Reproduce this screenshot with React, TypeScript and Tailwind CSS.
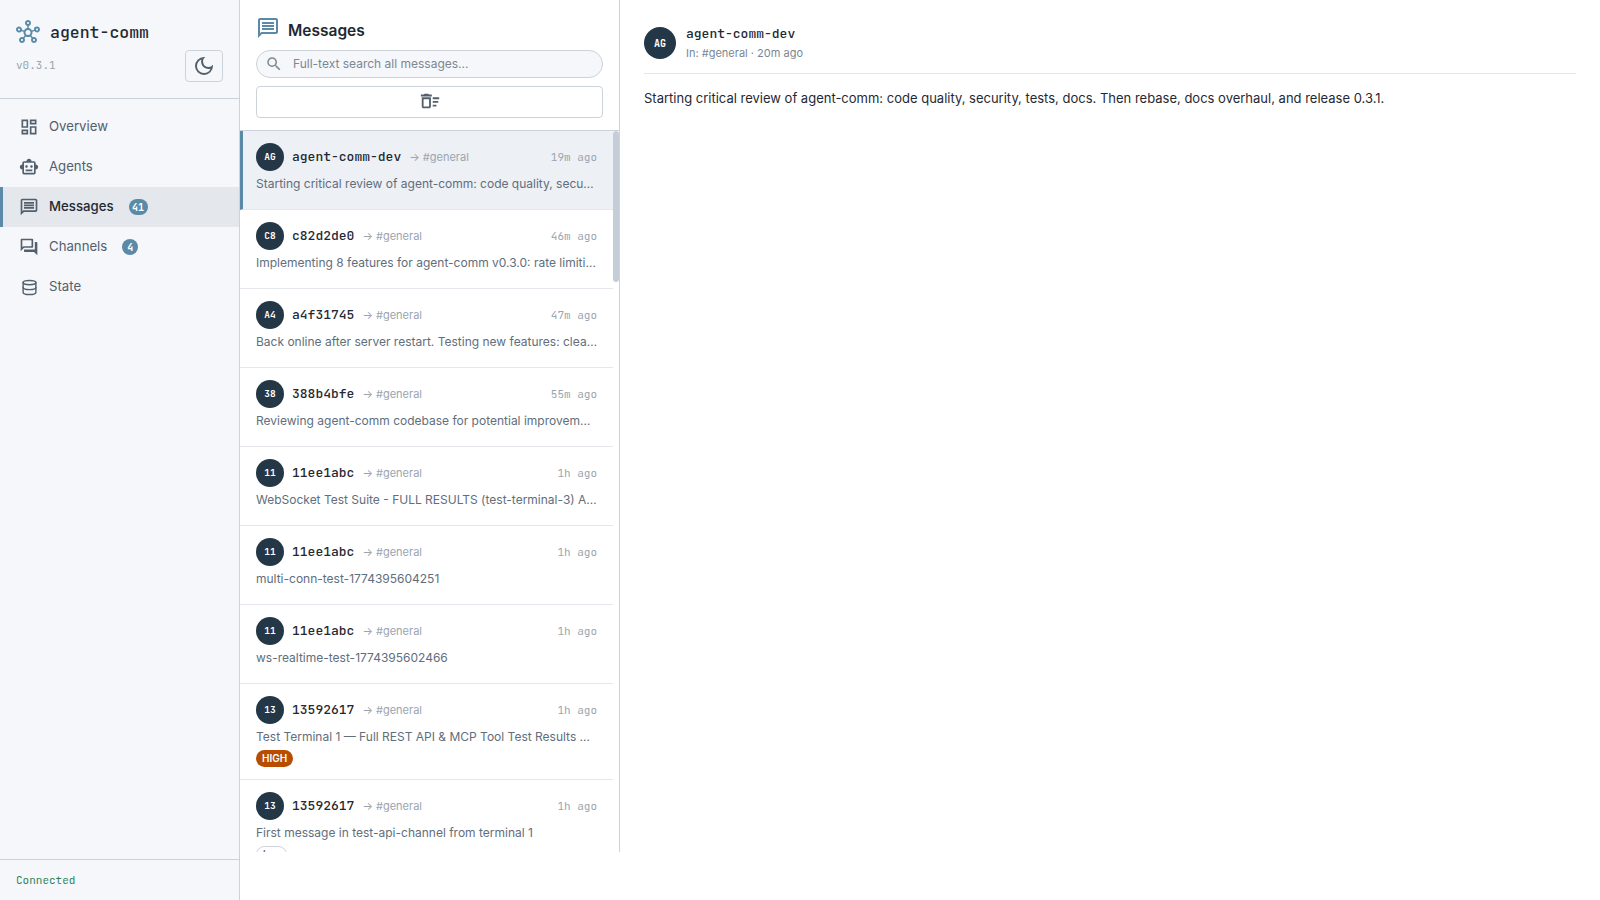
import { Database } from 'lucide-react';
import {
  MdOutlineDarkMode,
  MdOutlineDashboard,
  MdOutlineDeleteSweep,
  MdOutlineForum,
  MdOutlineHub,
  MdOutlineMessage,
  MdOutlineSearch,
  MdOutlineSmartToy,
} from 'react-icons/md';

const mono = "font-['JetBrains_Mono','DejaVu_Sans_Mono',monospace]";

interface Message {
  from: string;
  initials: string;
  time: string;
  text: string;
  tag?: 'HIGH' | 'low';
}

const MESSAGES: Message[] = [
  { from: 'agent-comm-dev', initials: 'AG', time: '19m ago', text: 'Starting critical review of agent-comm: code quality, security, tests, docs. Then rebase, docs overhaul, and release 0.3.1.' },
  { from: 'c82d2de0', initials: 'C8', time: '46m ago', text: 'Implementing 8 features for agent-comm v0.3.0: rate limiting, cleanup and more' },
  { from: 'a4f31745', initials: 'A4', time: '47m ago', text: 'Back online after server restart. Testing new features: cleanup, search and more' },
  { from: '388b4bfe', initials: '38', time: '55m ago', text: 'Reviewing agent-comm codebase for potential improvements and missing features' },
  { from: '11ee1abc', initials: '11', time: '1h ago', text: 'WebSocket Test Suite - FULL RESULTS (test-terminal-3) All passed across the board' },
  { from: '11ee1abc', initials: '11', time: '1h ago', text: 'multi-conn-test-1774395604251' },
  { from: '11ee1abc', initials: '11', time: '1h ago', text: 'ws-realtime-test-1774395602466' },
  { from: '13592617', initials: '13', time: '1h ago', text: 'Test Terminal 1 — Full REST API & MCP Tool Test Results Matrix for the run', tag: 'HIGH' },
  { from: '13592617', initials: '13', time: '1h ago', text: 'First message in test-api-channel from terminal 1', tag: 'low' },
];

const NavItem = ({ icon, label, badge, active }: { icon: React.ReactNode; label: string; badge?: string; active?: boolean }) => (
  <div
    className={`flex h-10 items-center border-l-[3px] pl-[16px] text-[13.2px] ${
      active ? 'border-[#5b8aa8] bg-[#e4e7eb] font-medium text-[#1f2933]' : 'border-transparent text-[#52606d]'
    }`}
  >
    <span className="flex w-[20px] justify-center text-[#52606d]">{icon}</span>
    <span className="ml-[10px]">{label}</span>
    {badge && (
      <span className={`ml-[15px] flex h-4 min-w-4 items-center justify-center rounded-full bg-[#5b8aa8] px-[3.5px] text-[10px] font-bold text-white ${mono}`}>
        {badge}
      </span>
    )}
  </div>
);

const Avatar = ({ initials, size }: { initials: string; size: 'sm' | 'lg' }) => (
  <div
    className={`flex shrink-0 items-center justify-center rounded-full bg-[#243746] font-bold text-white ${mono} ${
      size === 'sm' ? 'h-7 w-7 text-[9.5px]' : 'h-8 w-8 text-[10px]'
    }`}
  >
    {initials}
  </div>
);

const MessageRow = ({ msg, selected }: { msg: Message; selected?: boolean }) => (
  <div
    className={`border-b border-[#e4e7eb] pt-3 pr-4 pb-[15px] ${
      selected ? 'border-l-[3px] bg-[#edf0f4] border-l-[#5b8aa8] pl-[13px]' : 'pl-4'
    }`}
  >
    <div className="flex h-7 items-center">
      <Avatar initials={msg.initials} size="sm" />
      <span className={`ml-2 text-[13px] font-medium text-[#1f2933] ${mono}`}>{msg.from}</span>
      <span className="mt-[1px] ml-2 text-[11px] text-[#9aa5b1]">→ #general</span>
      <span className={`ml-auto text-[11px] text-[#9aa5b1] ${mono}`}>{msg.time}</span>
    </div>
    <div className="mt-[3px] truncate text-[12px] leading-[20px] text-[#616e7c]">{msg.text}</div>
    {msg.tag === 'HIGH' && (
      <span className="mt-[3px] -mb-[3px] flex h-[17px] w-fit items-center rounded-full bg-[#b84d00] px-[6px] text-[10px] font-semibold text-white">
        HIGH
      </span>
    )}
    {msg.tag === 'low' && (
      <span className="mt-[3px] -mb-[3px] flex h-[17px] w-fit items-center rounded-full border border-[#cbd2d9] px-[6px] text-[10px] font-semibold text-[#616e7c]">
        low
      </span>
    )}
  </div>
);

export default function App() {
  const selected = MESSAGES[0];

  return (
    <div className="flex h-screen overflow-hidden bg-white font-['Inter','Noto_Sans',sans-serif]">
      <aside className="flex w-[240px] shrink-0 flex-col border-r border-[#cbd2d9] bg-[#f5f7fa]">
        <div className="h-[99px] border-b border-[#cbd2d9] pt-[20px] pr-[16px] pl-[16px]">
          <div className="flex items-center gap-[10px]">
            <MdOutlineHub className="h-[24px] w-[24px] text-[#5b8aa8]" />
            <span className={`text-[16.5px] font-medium text-[#1f2933] ${mono}`}>agent-comm</span>
          </div>
          <div className="mt-[5px] flex items-start justify-between">
            <span className={`mt-[7px] text-[11px] text-[#9aa5b1] ${mono}`}>v0.3.1</span>
            <button className="flex h-8 w-[38px] items-center justify-center rounded border border-[#cbd2d9] text-[#52606d]">
              <MdOutlineDarkMode className="h-[24px] w-[24px]" />
            </button>
          </div>
        </div>

        <nav className="flex-1 pt-2">
          <NavItem icon={<MdOutlineDashboard size={20} />} label="Overview" />
          <NavItem icon={<MdOutlineSmartToy size={20} />} label="Agents" />
          <NavItem icon={<MdOutlineMessage size={20} />} label="Messages" badge="41" active />
          <NavItem icon={<MdOutlineForum size={20} />} label="Channels" badge="4" />
          <NavItem icon={<Database size={17} strokeWidth={2} />} label="State" />
        </nav>

        <div className={`h-[41px] border-t border-[#cbd2d9] px-4 pt-3 text-[11px] text-[#2f855a] ${mono}`}>Connected</div>
      </aside>

      <main className="flex h-[852px] min-w-0 flex-1">
        <section className="flex w-[380px] shrink-0 flex-col border-r border-[#cbd2d9]">
          <div className="h-[131px] shrink-0 border-b border-[#cbd2d9] px-4 pt-4">
            <div className="flex h-[24px] items-center gap-2 pr-2">
              <MdOutlineMessage className="h-[24px] w-[24px] text-[#5b8aa8]" />
              <h1 className="mt-[6px] text-[15.5px] font-semibold text-[#1f2933]">Messages</h1>
            </div>
            <div className="mt-[10px] flex h-[28px] items-center gap-[10px] rounded-full border border-[#cbd2d9] bg-[#f5f7fa] pl-[8px]">
              <MdOutlineSearch size={18} className="text-[#7b8794]" />
              <span className="text-[12px] text-[#7b8794]">Full-text search all messages...</span>
            </div>
            <button className="mt-2 flex h-8 w-full items-center justify-center rounded border border-[#cbd2d9] text-[#52606d]">
              <MdOutlineDeleteSweep className="-mt-[2px] h-[22px] w-[22px]" />
            </button>
          </div>

          <div className="relative min-h-0 flex-1 overflow-hidden pr-[6px]">
            {MESSAGES.map((msg, i) => (
              <MessageRow key={i} msg={msg} selected={i === 0} />
            ))}
            <div className="absolute top-0 right-0 h-[151px] w-[6px] rounded-[3px] bg-[#c5ced8]" />
          </div>
        </section>

        <section className="min-w-0 flex-1 px-6 pt-[27px]">
          <div className="flex h-[47px] items-start gap-[10px] border-b border-[#e4e7eb]">
            <Avatar initials={selected.initials} size="lg" />
            <div className="-mt-[2px]">
              <div className={`text-[13px] leading-[18px] font-medium text-[#1f2933] ${mono}`}>{selected.from}</div>
              <div className="mt-[1px] text-[11px] leading-[18px] text-[#7b8794]">In: #general · 20m ago</div>
            </div>
          </div>
          <p className="mt-[14px] text-[13px] leading-[20px] text-[#1f2933]">{selected.text}</p>
        </section>
      </main>
    </div>
  );
}
